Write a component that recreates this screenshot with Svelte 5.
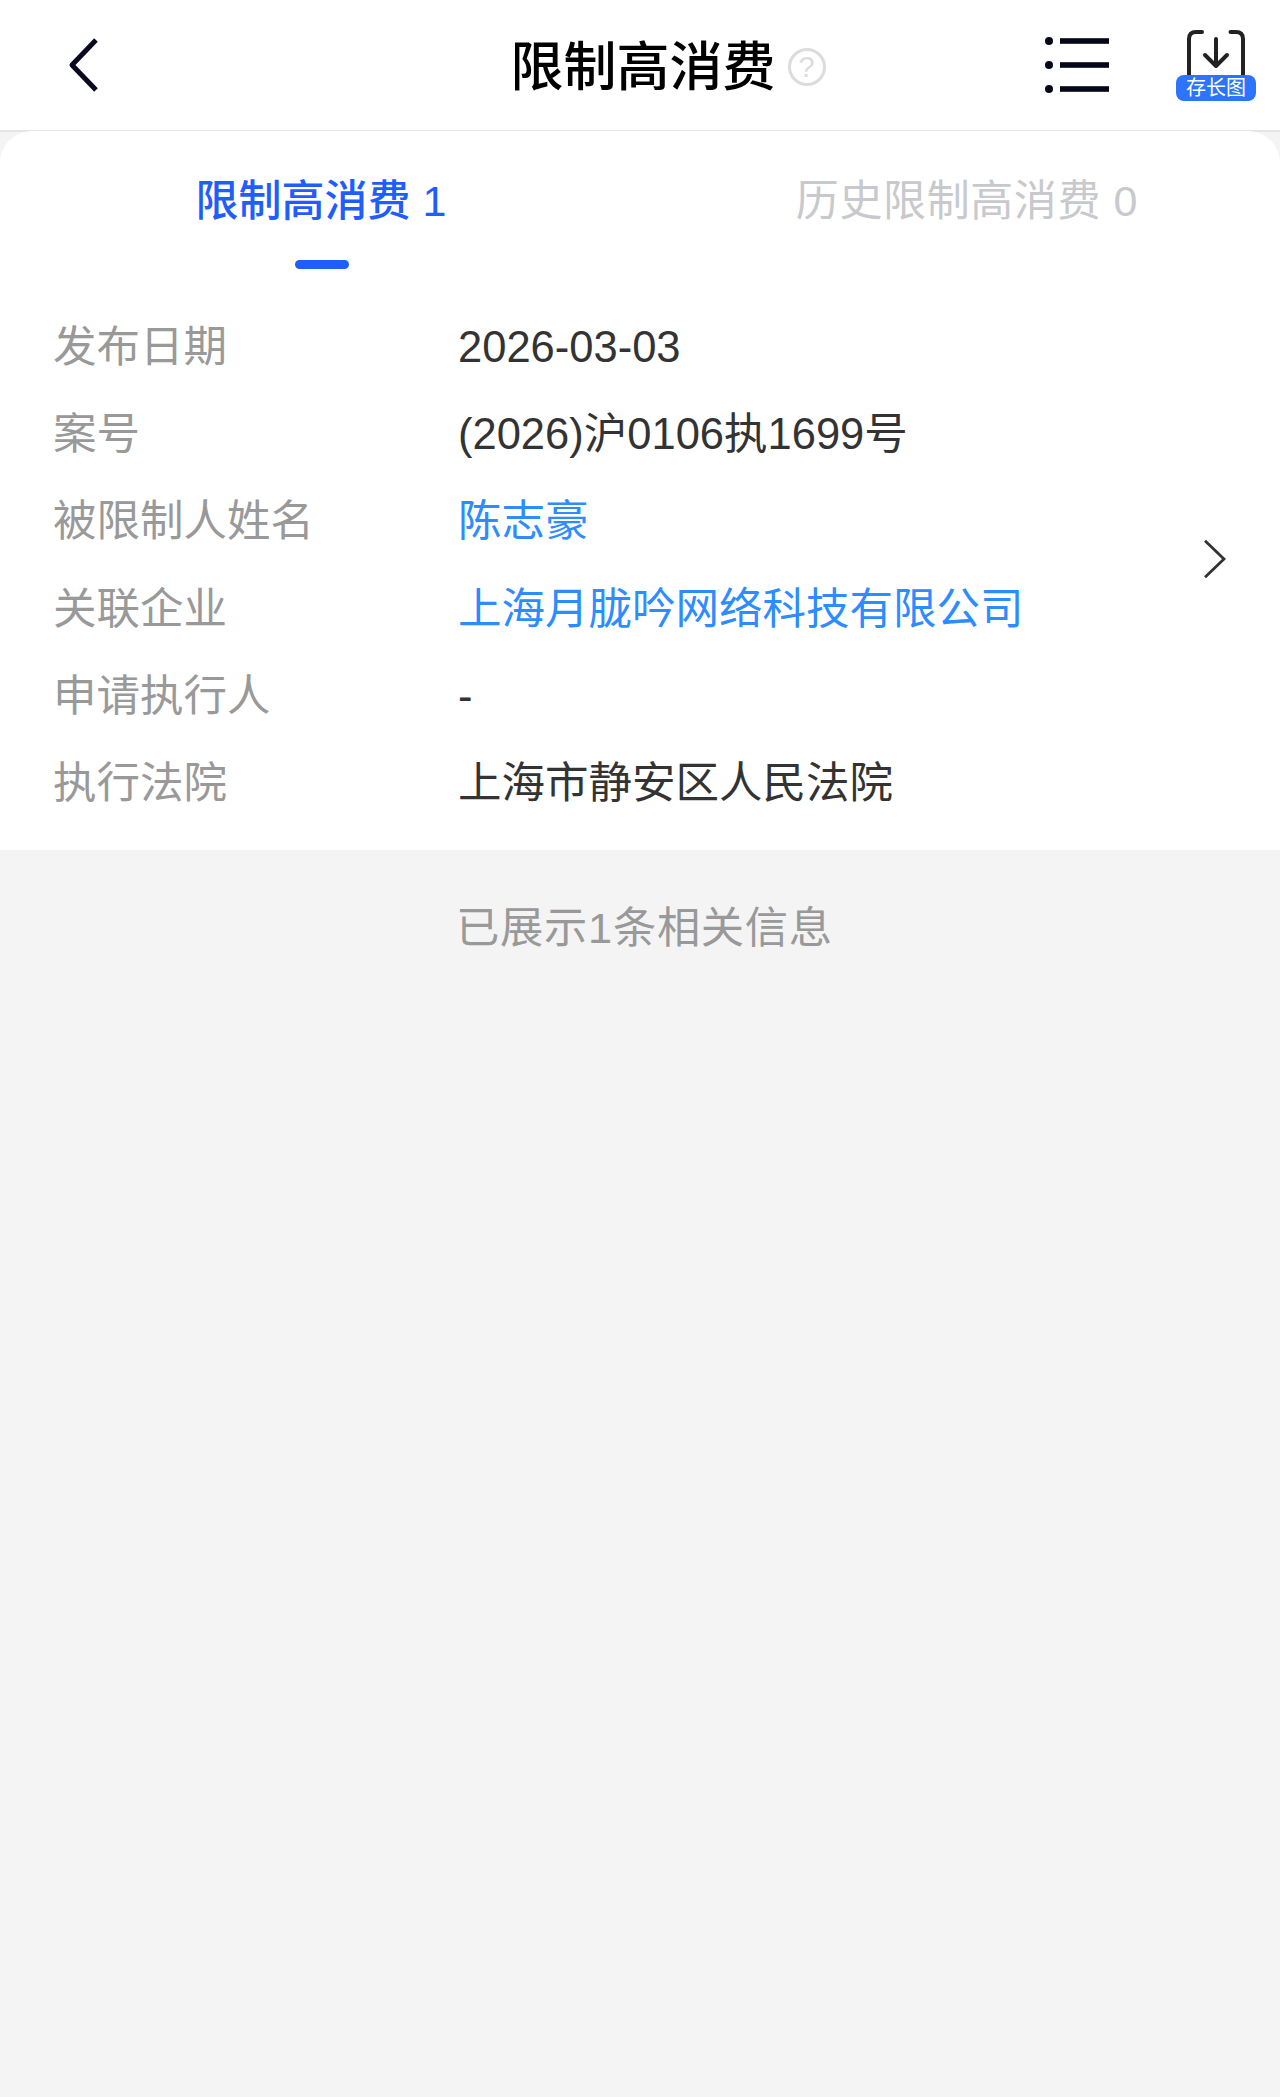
<script lang="ts">
	const rows = [
		{ label: '发布日期', value: '2026-03-03' },
		{ label: '案号', value: '(2026)沪0106执1699号' },
		{ label: '被限制人姓名', value: '陈志豪', link: true },
		{ label: '关联企业', value: '上海月胧吟网络科技有限公司', link: true },
		{ label: '申请执行人', value: '-' },
		{ label: '执行法院', value: '上海市静安区人民法院' }
	];
</script>

<main class="page">
	<header class="nav">
		<svg class="back" viewBox="0 0 40 60" aria-hidden="true">
			<path d="M32 5 L8 30 L32 55" />
		</svg>
		<h1 class="title">
			限制高消费
			<span class="help">?</span>
		</h1>
		<div class="actions">
			<svg class="menu" viewBox="0 0 70 56" aria-hidden="true">
				<circle cx="5" cy="4" r="4" />
				<circle cx="5" cy="28" r="4" />
				<circle cx="5" cy="52" r="4" />
				<rect x="16" y="1.200" width="49" height="5.600" />
				<rect x="16" y="25.200" width="49" height="5.600" />
				<rect x="16" y="49.200" width="49" height="5.600" />
			</svg>
			<div class="save">
				<svg viewBox="0 0 80 71" aria-hidden="true">
					<path d="M26 2 H20 Q13 2 13 9 V46" />
					<path d="M54.500 2 H60 Q67 2 67 9 V46" />
					<path d="M40 9 V36 M29 25 L40 36 L51 25" />
				</svg>
				<span class="badge">存长图</span>
			</div>
		</div>
	</header>

	<section class="card">
		<div class="tabs">
			<div class="tab active">限制高消费 1<i></i></div>
			<div class="tab second">历史限制高消费 0</div>
		</div>
		<div class="body">
			<dl>
				{#each rows as row}
					<div class="row">
						<dt>{row.label}</dt>
						<dd class:link={row.link}>{row.value}</dd>
					</div>
				{/each}
			</dl>
			<svg class="chevron" viewBox="0 0 24 40" aria-hidden="true">
				<path d="M2 1.700 L21 20 L2 38.300" />
			</svg>
		</div>
	</section>

	<p class="foot">已展示1条相关信息</p>
</main>

<style>
	:global(body) {
		margin: 0;
		background: #f4f4f4;
		font-family: "Liberation Sans", "Noto Sans CJK SC", sans-serif;
	}
	.page { min-height: 2097px; }
	.nav {
		box-sizing: border-box;
		height: 132px;
		display: grid;
		grid-template-columns: 1fr auto 1fr;
		align-items: center;
		background: #fff;
		border-bottom: 2px solid #e4e4e4;
	}
	.back {
		width: 40px;
		height: 60px;
		margin-left: 64px;
		fill: none;
		stroke: #0a0a1e;
		stroke-width: 5;
		stroke-linejoin: round;
	}
	.title {
		position: relative;
		margin: 5px 0 0 6px;
		font-size: 53px;
		font-weight: 500;
		color: #000;
		line-height: 70px;
	}
	.help {
		position: absolute;
		left: 277px;
		top: 15px;
		box-sizing: border-box;
		width: 38px;
		height: 38px;
		border: 3px solid #dcdcdc;
		border-radius: 50%;
		color: #dcdcdc;
		font-size: 29px;
		font-weight: 400;
		line-height: 32px;
		text-align: center;
	}
	.actions {
		display: flex;
		justify-content: flex-end;
		align-items: center;
		gap: 62px;
		padding-right: 24px;
	}
	.menu {
		width: 70px;
		height: 56px;
		fill: #05061a;
	}
	.save {
		position: relative;
		width: 80px;
		height: 71px;
	}
	.save svg {
		display: block;
		width: 80px;
		height: 71px;
		fill: none;
		stroke: #222;
		stroke-width: 4;
		stroke-linecap: round;
		stroke-linejoin: round;
	}
	.badge {
		position: absolute;
		left: 0;
		right: 0;
		bottom: 0;
		height: 26px;
		border-radius: 8px;
		background: #2c74fb;
		color: #fff;
		font-size: 20px;
		line-height: 26px;
		text-align: center;
	}
	.card {
		margin-top: -1px;
		background: #fff;
		border-radius: 32px 32px 0 0;
	}
	.tabs {
		display: grid;
		grid-template-columns: 1fr 1fr;
		height: 138px;
		font-size: 43px;
		text-align: center;
	}
	.tab {
		position: relative;
		padding-top: 40px;
		line-height: 60px;
		color: #c8c9cc;
	}
	.tab.active {
		padding-left: 2px;
		color: #1f5efc;
		font-weight: 500;
	}
	.tab.second {
		padding-left: 14px;
		letter-spacing: 0.600px;
	}
	.tab i {
		position: absolute;
		left: 295px;
		bottom: 0;
		width: 54px;
		height: 9px;
		border-radius: 5px;
		background: #1f5efc;
	}
	.body {
		display: flex;
		align-items: center;
		padding-right: 53px;
	}
	dl {
		flex: 1;
		margin: 0;
		padding: 34px 0 23px;
	}
	.row {
		display: flex;
		height: 87.300px;
		align-items: center;
		padding-left: 53px;
		font-size: 43.500px;
		line-height: 60px;
	}
	dt {
		width: 405px;
		color: #999;
	}
	dd {
		margin: 0;
		color: #333;
	}
	dd.link { color: #2d8cff; }
	.chevron {
		width: 24px;
		height: 40px;
		fill: none;
		stroke: #333;
		stroke-width: 2.800;
	}
	.foot {
		margin: 48px 0 0;
		padding-left: 9px;
		font-size: 43.300px;
		letter-spacing: 0.700px;
		line-height: 60px;
		color: #999;
		text-align: center;
	}
</style>
